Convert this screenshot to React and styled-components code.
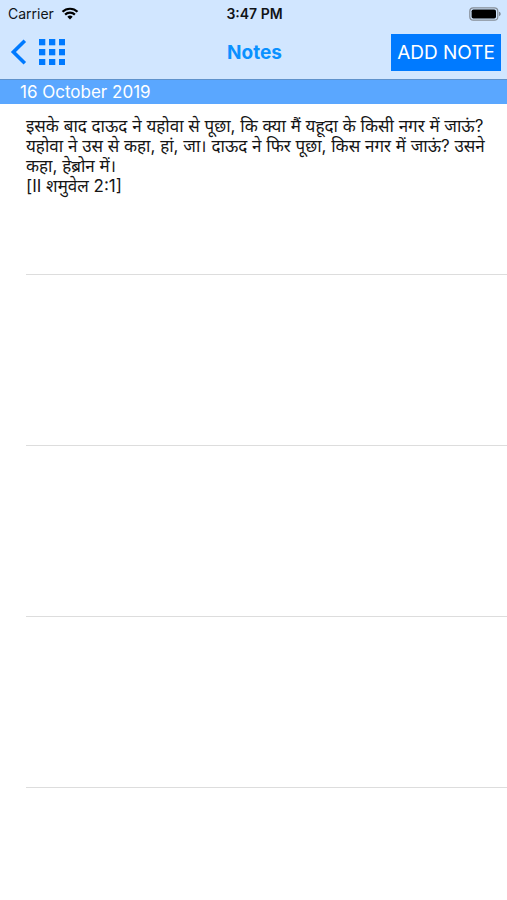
import styled, { createGlobalStyle } from "styled-components";

const GlobalStyle = createGlobalStyle`
  * {
    box-sizing: border-box;
  }
  body {
    margin: 0;
    background-color: #ffffff;
    font-family: Inter, "Noto Sans", sans-serif;
  }
`;

const Screen = styled.div`
  min-height: 100vh;
  overflow: hidden;
`;

const Header = styled.header`
  background-color: #d1e6ff;
  border-bottom: 1px solid #5f92cc;
`;

const StatusBar = styled.div`
  display: grid;
  grid-template-columns: 1fr auto 1fr;
  align-items: center;
  height: 27px;
  padding: 0 6px 0 8px;
  font-size: 14px;
  color: #101418;
`;

const Carrier = styled.div`
  display: flex;
  align-items: center;
  gap: 7px;
`;

const Clock = styled.time`
  font-weight: 600;
`;

const Battery = styled.svg`
  justify-self: end;
`;

const NavBar = styled.nav`
  display: grid;
  grid-template-columns: 1fr auto 1fr;
  align-items: center;
  height: 52px;
  padding: 0 6px 2px 8px;
`;

const NavGroup = styled.div`
  display: flex;
  align-items: center;
  gap: 12px;
`;

const IconBtn = styled.button`
  display: flex;
  padding: 0;
  border: none;
  background-color: transparent;
  color: #007aff;
  cursor: pointer;
`;

const Title = styled.h1`
  margin: 0;
  font-size: 19px;
  font-weight: 700;
  color: #0a91ff;
`;

const AddBtn = styled.button`
  justify-self: end;
  height: 37px;
  padding: 0 6px;
  border: none;
  background-color: #007aff;
  color: #ffffff;
  font-family: inherit;
  font-size: 19px;
  white-space: nowrap;
  cursor: pointer;
`;

const DateHeading = styled.h2`
  margin: 0;
  padding: 0 20px;
  font-size: 17px;
  font-weight: 400;
  line-height: 24px;
  color: #ffffff;
  background-color: #5aa7ff;
`;

const NoteList = styled.ul`
  margin: 0;
  padding: 0 0 0 26px;
  list-style: none;
`;

const NoteRow = styled.li`
  min-height: 171px;
  padding: 12px 16px 12px 0;
  border-bottom: 1px solid #dddddd;
  &:last-child {
    min-height: 0;
    border-bottom: none;
  }
`;

const NoteText = styled.p`
  margin: 0;
  font-size: 17px;
  line-height: 20px;
  color: #151515;
`;

const WifiIcon = () => (
  <svg width="18" height="13" viewBox="0 0 18 13" fill="none" aria-hidden="true">
    <path
      d="M1.5 4.8a10.7 10.7 0 0 1 15 0M4.1 7.6a7 7 0 0 1 9.8 0"
      stroke="#000000"
      strokeWidth="2.2"
    />
    <path d="M9 12.5 6.3 9.8a3.8 3.8 0 0 1 5.4 0z" fill="#000000" />
  </svg>
);

const BatteryIcon = () => (
  <Battery width="32" height="14" viewBox="0 0 32 14" aria-hidden="true">
    <rect
      x="0.8"
      y="0.8"
      width="28"
      height="12.4"
      rx="3.5"
      fill="none"
      stroke="#858d97"
      strokeWidth="1.2"
    />
    <rect x="2.6" y="2.4" width="24.4" height="9.2" rx="1.8" fill="#000000" />
    <path d="M30.2 4.8c1.8.6 1.8 3.8 0 4.4z" fill="#6d7480" />
  </Battery>
);

const BackIcon = () => (
  <svg width="19" height="26" viewBox="0 0 19 26" fill="none" aria-hidden="true">
    <path d="M16.8 1.8 5.4 13l11.4 11.2" stroke="currentColor" strokeWidth="3.6" />
  </svg>
);

const cells = [0, 10, 20];

const GridIcon = () => (
  <svg width="26" height="26" viewBox="0 0 26 26" fill="currentColor" aria-hidden="true">
    {cells.map((y) =>
      cells.map((x) => (
        <rect key={`${x}-${y}`} x={x} y={y} width="6.3" height="6.3" />
      ))
    )}
  </svg>
);

const notes = [
  {
    id: "n1",
    text: "इसके बाद दाऊद ने यहोवा से पूछा, कि क्या मैं यहूदा के किसी नगर में जाऊं? यहोवा ने उस से कहा, हां, जा। दाऊद ने फिर पूछा, किस नगर में जाऊं? उसने कहा, हेब्रोन में।",
    verse: "[II शमुवेल 2:1]",
  },
  { id: "n2" },
  { id: "n3" },
  { id: "n4" },
  { id: "n5" },
];

const App = () => {
  return (
    <Screen>
      <GlobalStyle />
      <Header>
        <StatusBar>
          <Carrier>
            Carrier
            <WifiIcon />
          </Carrier>
          <Clock>3:47 PM</Clock>
          <BatteryIcon />
        </StatusBar>
        <NavBar>
          <NavGroup>
            <IconBtn type="button" aria-label="Back">
              <BackIcon />
            </IconBtn>
            <IconBtn type="button" aria-label="Menu">
              <GridIcon />
            </IconBtn>
          </NavGroup>
          <Title>Notes</Title>
          <AddBtn type="button">ADD NOTE</AddBtn>
        </NavBar>
      </Header>
      <main>
        <DateHeading>16 October 2019</DateHeading>
        <NoteList>
          {notes.map((note) => (
            <NoteRow key={note.id}>
              {note.text && (
                <NoteText lang="hi">
                  {note.text}
                  <br />
                  {note.verse}
                </NoteText>
              )}
            </NoteRow>
          ))}
        </NoteList>
      </main>
    </Screen>
  );
};

export default App;
